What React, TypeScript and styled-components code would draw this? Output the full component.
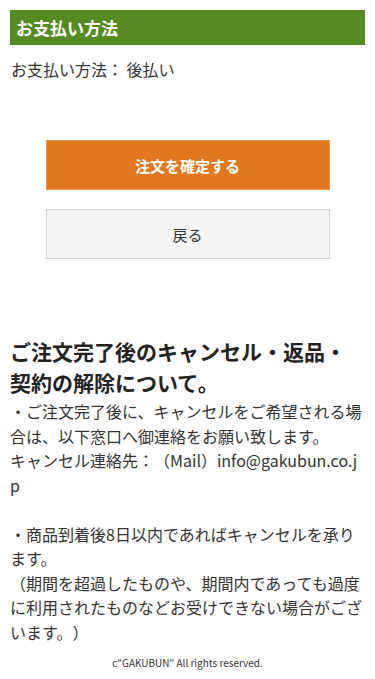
import React from "react";
import styled, { createGlobalStyle } from "styled-components";

const Global = createGlobalStyle`
  html, body { margin: 0; padding: 0; background: #fff; }
  body {
    font-family: "Noto Sans CJK JP", "Noto Sans", sans-serif;
    color: #333;
    -webkit-font-smoothing: antialiased;
    text-spacing-trim: space-all;
  }
`;

const Page = styled.div`
  padding: 10px 10px 0;
`;

const SectionTitle = styled.h2`
  margin: 0;
  height: 35px;
  display: flex;
  align-items: center;
  padding: 0 6px;
  background: #568a22;
  color: #fff;
  font-size: 17px;
  font-weight: 700;
  line-height: 1;
`;

const Info = styled.p`
  margin: 0;
  padding: 12px 1px 0;
  font-size: 16px;
  line-height: 24px;
  color: #333;
`;

const Actions = styled.div`
  display: flex;
  flex-direction: column;
  align-items: center;
  gap: 19px;
  padding-top: 59px;
`;

const Button = styled.button<{ $primary?: boolean }>`
  box-sizing: border-box;
  width: 80%;
  height: 50px;
  margin: 0;
  border: 1px solid ${(p) => (p.$primary ? "#eb9a55" : "#d4d4d4")};
  background: ${(p) => (p.$primary ? "#e2781e" : "#f5f5f5")};
  color: ${(p) => (p.$primary ? "#fff" : "#333")};
  font-family: inherit;
  font-size: 15px;
  font-weight: ${(p) => (p.$primary ? 700 : 400)};
  cursor: pointer;
`;

const Notice = styled.section`
  padding-top: 77px;
`;

const NoticeTitle = styled.h3`
  margin: 0 0 1px;
  font-size: 21px;
  font-weight: 700;
  line-height: 31px;
  color: #222;
`;

const Phrase = styled.span`
  white-space: nowrap;
`;

const NoticeBody = styled.p`
  margin: 0;
  font-size: 16px;
  line-height: 24.5px;
  color: #333;
  word-break: break-all;
`;

const Footer = styled.footer`
  text-align: center;
  font-size: 10px;
  line-height: 16px;
  color: #333;
  padding: 11px 0 10px;
`;

export default function App() {
  return (
    <>
      <Global />
      <Page>
        <SectionTitle>お支払い方法</SectionTitle>
        <Info>お支払い方法： 後払い</Info>
        <Actions>
          <Button $primary>注文を確定する</Button>
          <Button>戻る</Button>
        </Actions>
        <Notice>
          <NoticeTitle>
            ご注文完了後のキャンセル・返品・<Phrase>契約の解除について。</Phrase>
          </NoticeTitle>
          <NoticeBody>
            ・ご注文完了後に、キャンセルをご希望される場合は、以下窓口へ御連絡をお願い致します。
            <br />
            キャンセル連絡先：（Mail）info@gakubun.co.jp
            <br />
            <br />
            ・商品到着後8日以内であればキャンセルを承ります。
            <br />
            （期間を超過したものや、期間内であっても過度に利用されたものなどお受けできない場合がございます。）
          </NoticeBody>
        </Notice>
        <Footer>c"GAKUBUN" All rights reserved.</Footer>
      </Page>
    </>
  );
}
